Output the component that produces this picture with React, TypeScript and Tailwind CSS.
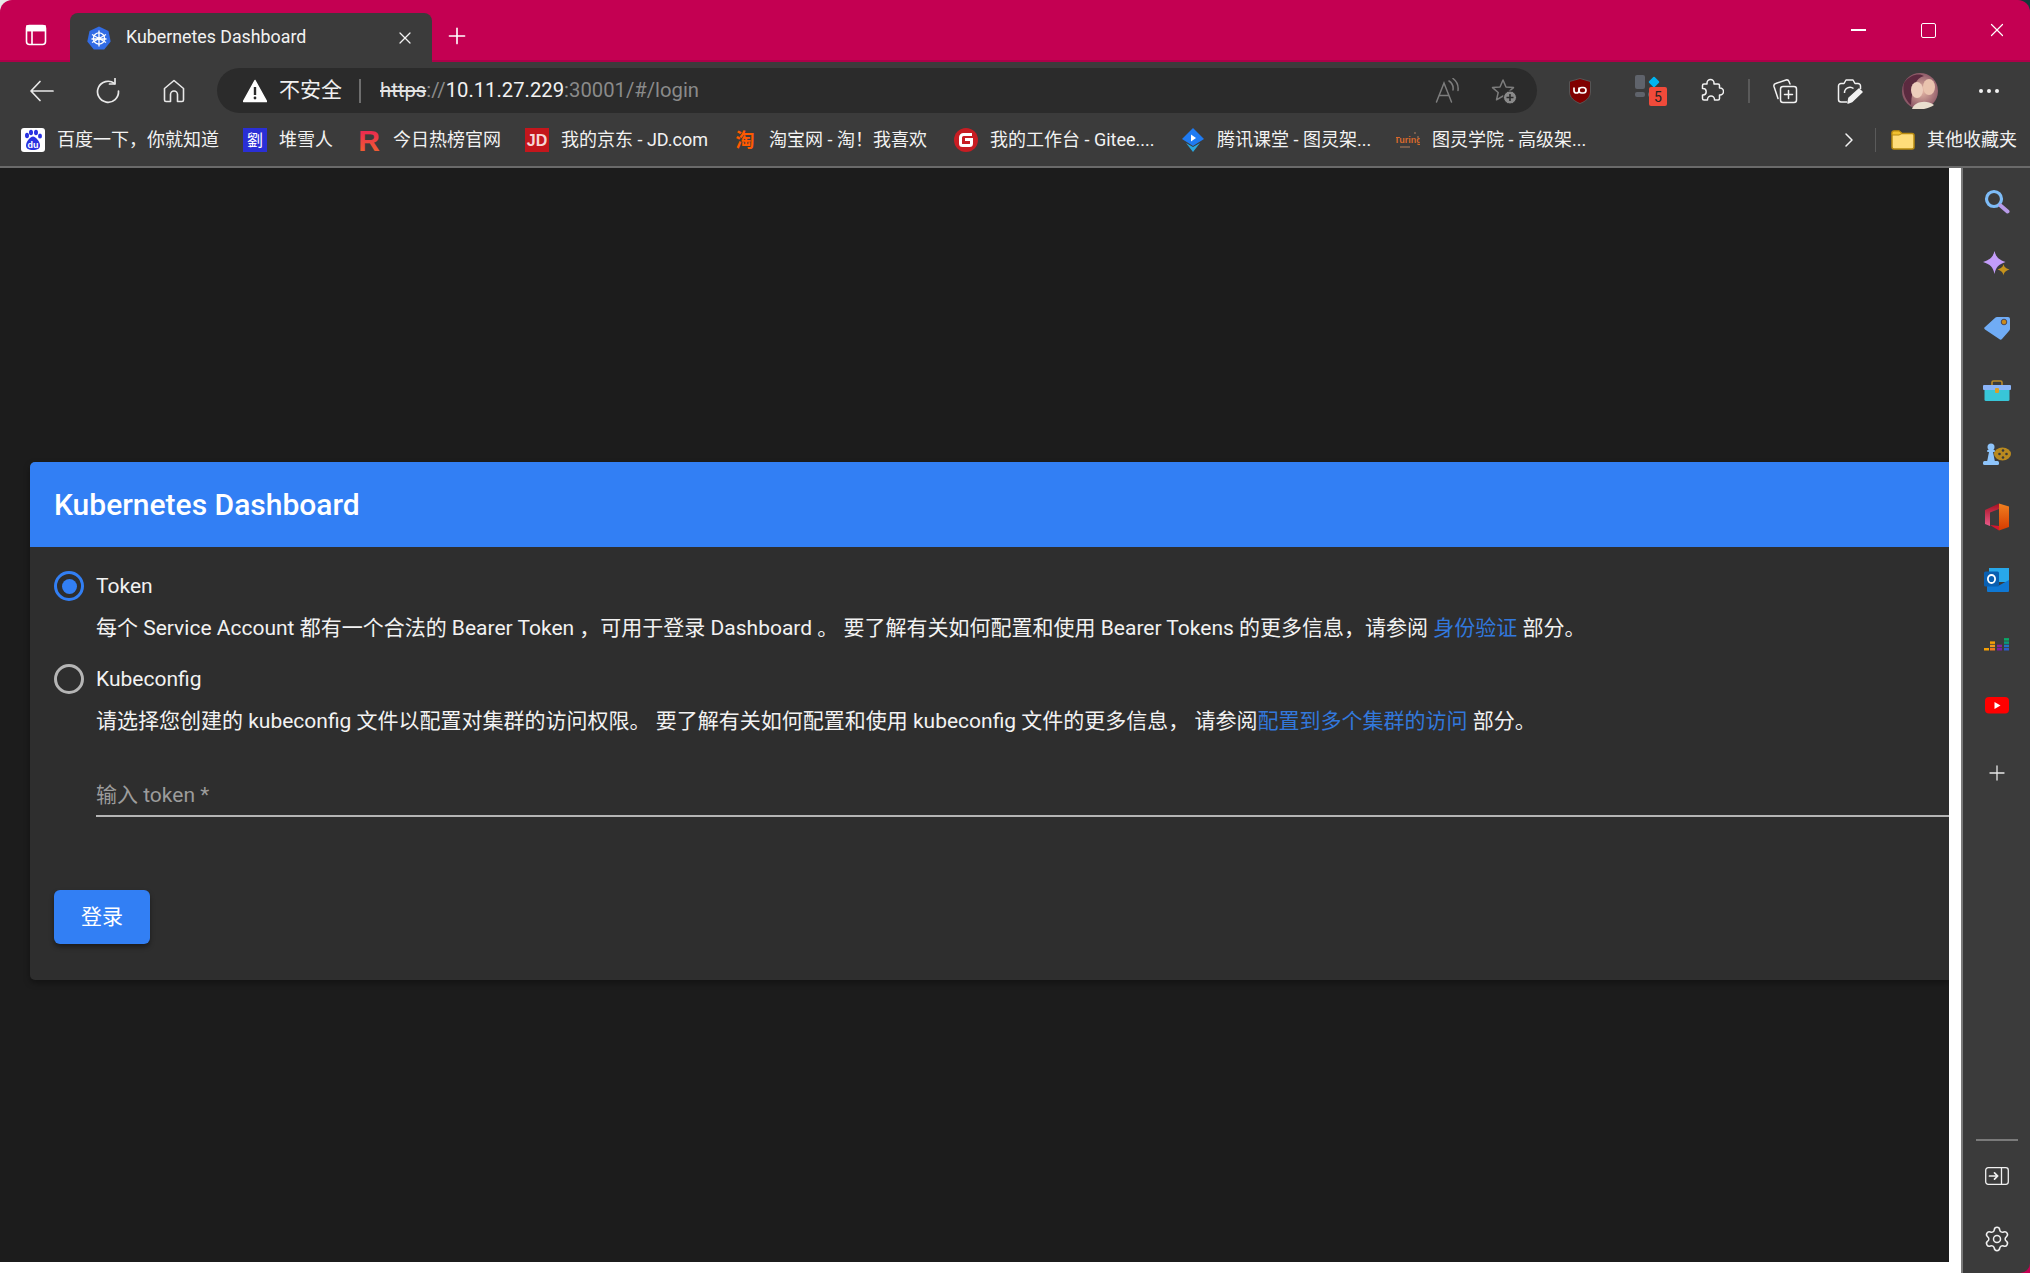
import { ChevronRight, Plus, Settings, X } from "lucide-react";
import type { ReactNode } from "react";

const bookmarks: { width: string; icon: ReactNode; label: string }[] = [
  { width: "w-[222px]", icon: <BaiduIcon />, label: "百度一下，你就知道" },
  { width: "w-[114px]", icon: <BlueSealIcon />, label: "堆雪人" },
  { width: "w-[168px]", icon: <TopHubIcon />, label: "今日热榜官网" },
  { width: "w-[208px]", icon: <JdIcon />, label: "我的京东 - JD.com" },
  { width: "w-[221px]", icon: <TaobaoIcon />, label: "淘宝网 - 淘！我喜欢" },
  { width: "w-[227px]", icon: <GiteeIcon />, label: "我的工作台 - Gitee...." },
  { width: "w-[215px]", icon: <TencentIcon />, label: "腾讯课堂 - 图灵架..." },
  { width: "w-[441px]", icon: <TuringIcon />, label: "图灵学院 - 高级架..." },
];

function BaiduIcon() {
  return (
    <svg width="24" height="24" viewBox="0 0 24 24">
      <rect x="0" y="0" width="24" height="24" rx="3" fill="#fff" />
      <g fill="#2932e1">
        <ellipse cx="6" cy="7.5" rx="2" ry="2.8" />
        <ellipse cx="10" cy="4.5" rx="2" ry="2.8" />
        <ellipse cx="15" cy="4.5" rx="2" ry="2.8" />
        <ellipse cx="19" cy="8" rx="2" ry="2.6" />
        <path d="M12 8.5c3 0 7 5.500 7 9 0 3-2.500 4.500-7 4.500S5 20.500 5 17.500c0-3.500 4-9 7-9Z" />
      </g>
      <text x="12" y="20" textAnchor="middle" fontSize="9" fontWeight="700" fill="#fff" fontFamily="Liberation Sans, sans-serif">
        du
      </text>
    </svg>
  );
}

function BlueSealIcon() {
  return (
    <svg width="24" height="24" viewBox="0 0 24 24">
      <rect width="24" height="24" fill="#2a2fd6" />
      <text x="12" y="18" textAnchor="middle" fontSize="16" fill="#fff" fontFamily="Noto Sans CJK SC, sans-serif">
        劉
      </text>
    </svg>
  );
}

function TopHubIcon() {
  return (
    <svg width="24" height="24" viewBox="0 0 24 24">
      <defs>
        <linearGradient id="hub" x1="0" y1="0" x2="0" y2="1">
          <stop offset="0" stopColor="#e8195a" />
          <stop offset="1" stopColor="#f26a2a" />
        </linearGradient>
      </defs>
      <text x="12" y="23" textAnchor="middle" fontSize="30" fontWeight="700" fill="url(#hub)" fontFamily="Liberation Sans, sans-serif">
        R
      </text>
    </svg>
  );
}

function JdIcon() {
  return (
    <svg width="24" height="24" viewBox="0 0 24 24">
      <rect width="24" height="24" fill="#c4161c" />
      <text x="12" y="18" textAnchor="middle" fontSize="16" fontWeight="700" fill="#f6d6d6" fontFamily="Liberation Sans, sans-serif">
        JD
      </text>
    </svg>
  );
}

function TaobaoIcon() {
  return (
    <svg width="24" height="24" viewBox="0 0 24 24">
      <text x="12" y="19" textAnchor="middle" fontSize="19" fontWeight="700" fill="#ff5a00" fontFamily="Noto Sans CJK SC, sans-serif">
        淘
      </text>
    </svg>
  );
}

function GiteeIcon() {
  return (
    <svg width="24" height="24" viewBox="0 0 24 24">
      <circle cx="12" cy="12" r="12" fill="#c71d23" />
      <path d="M18 6.500H9.500A3 3 0 0 0 6.500 9.500v6a2 2 0 0 0 2 2h7a2 2 0 0 0 2-2V11.500H11" fill="none" stroke="#fff" strokeWidth="3" />
    </svg>
  );
}

function TencentIcon() {
  return (
    <svg width="24" height="24" viewBox="0 0 24 24">
      <path d="M12 0l11 11-11 7L1 11Z" fill="#1f7bf2" />
      <path d="M5 15l7 4 7-4-7 9Z" fill="#2aa6de" />
      <path d="M10 6.500l5 3.500-5 3.500Z" fill="#fff" />
    </svg>
  );
}

function TuringIcon() {
  return (
    <svg width="24" height="24" viewBox="0 0 24 24">
      <text x="12" y="15" textAnchor="middle" fontSize="9" fontWeight="700" fill="#d8692b" fontFamily="Liberation Sans, sans-serif">
        Turing
      </text>
      <path d="M19 4v2M22 8v2M4 19h10" stroke="#8a6a55" strokeWidth="1.500" />
    </svg>
  );
}

function KubeIcon() {
  return (
    <svg width="24" height="24" viewBox="0 0 24 24">
      <path d="M12 .5l9.500 4.600 2.200 10.300-6.500 8.200H6.800L.3 15.400 2.500 5.100Z" fill="#326ce5" />
      <g stroke="#fff" strokeWidth="1.300" fill="none">
        <circle cx="12" cy="12.500" r="5.600" />
        <path d="M12 4.500v16M5 8.500l14 8M19 8.500l-14 8M4.500 13h15" />
      </g>
      <circle cx="12" cy="12.500" r="1.500" fill="#fff" />
    </svg>
  );
}

function TabsIcon() {
  return (
    <svg width="22" height="22" viewBox="0 0 22 22" fill="none" stroke="#fff" strokeWidth="1.600">
      <rect x="1.500" y="1.500" width="19" height="19" rx="3" />
      <path d="M1.500 6.500h19M7 6.500v14" />
      <path d="M2 2h18v4.500H2Z" fill="#fff" />
    </svg>
  );
}

function BackIcon() {
  return (
    <svg width="26" height="26" viewBox="0 0 26 26" fill="none" stroke="#e8e8e8" strokeWidth="1.700" strokeLinecap="round" strokeLinejoin="round">
      <path d="M24 13H2.500M11 3.500L2 13l9 9.500" />
    </svg>
  );
}

function RefreshIcon() {
  return (
    <svg width="26" height="26" viewBox="0 0 26 26" fill="none" stroke="#e8e8e8" strokeWidth="1.700" strokeLinecap="round" strokeLinejoin="round">
      <path d="M19.500 5.500A10.500 10.500 0 1 0 23.500 13" />
      <path d="M20 .5v5.500h-5.500" />
    </svg>
  );
}

function HomeIcon() {
  return (
    <svg width="26" height="26" viewBox="0 0 26 26" fill="none" stroke="#e8e8e8" strokeWidth="1.600" strokeLinejoin="round">
      <path d="M13 2.500L3.500 10.500V22a1.500 1.500 0 0 0 1.500 1.500h4.500V16.500a3.500 3.500 0 0 1 7 0v7H21a1.500 1.500 0 0 0 1.500-1.500V10.500Z" />
    </svg>
  );
}

function WarningIcon() {
  return (
    <svg width="24" height="24" viewBox="0 0 24 24">
      <path d="M12 1.500L23.500 22.500H.5Z" fill="#fff" stroke="#fff" strokeLinejoin="round" strokeWidth="1.500" />
      <path d="M12 8v8" stroke="#2b2b2b" strokeWidth="2.400" />
      <circle cx="12" cy="19" r="1.400" fill="#2b2b2b" />
    </svg>
  );
}

function ReadAloudIcon() {
  return (
    <svg width="26" height="26" viewBox="0 0 26 26" fill="none" stroke="#7d7d7d" strokeWidth="1.500" strokeLinecap="round">
      <path d="M1.500 24L9 5l7.500 19M4.500 17.500h9" />
      <path d="M14 3a9 9 0 0 1 4 9M18 .5a13 13 0 0 1 5 12" />
    </svg>
  );
}

function StarAddIcon() {
  return (
    <svg width="26" height="26" viewBox="0 0 26 26" fill="none">
      <path d="M12 2l3 7 7.500.6-5.700 4.900 1.700 7.300L12 18l-6.500 3.800 1.700-7.300L1.500 9.600 9 9Z" stroke="#7d7d7d" strokeWidth="1.500" strokeLinejoin="round" />
      <circle cx="19" cy="19.500" r="6.500" fill="#8a8a8a" stroke="#2b2b2b" />
      <path d="M19 16v7M15.500 19.500h7" stroke="#2b2b2b" strokeWidth="1.600" />
    </svg>
  );
}

function UBlockIcon() {
  return (
    <svg width="22" height="26" viewBox="0 0 22 26">
      <path d="M11 0.500L21.500 3.500V14c0 5.500-5 9.500-10.500 11.500C5.500 23.500.5 19.500.5 14V3.500Z" fill="#800000" stroke="#555" />
      <path d="M5 9.500v3a2.500 2.500 0 0 0 5 0v-3" fill="none" stroke="#fff" strokeWidth="1.700" />
      <rect x="10" y="9.500" width="7" height="5.500" rx="2.700" fill="none" stroke="#fff" strokeWidth="1.700" />
    </svg>
  );
}

function TileIcon() {
  return (
    <div className="relative h-[31px] w-[32px]">
      <div className="grid h-[22px] w-[22px] grid-cols-2 gap-[3px]">
        <span className="rounded-[2px] bg-[#5f636b]" />
        <span className="flex items-center justify-center">
          <span className="h-[8px] w-[8px] translate-x-[2px] rotate-45 rounded-[1px] bg-[#00b4f0]" />
        </span>
        <span className="rounded-[2px] bg-[#5f636b]" />
        <span className="rounded-[2px] bg-[#5f636b]" />
      </div>
      <span className="absolute bottom-0 right-0 flex h-[19px] w-[18px] items-center justify-center rounded-[2px] bg-[#f04a3a] text-[14px] leading-none text-[#222]">
        5
      </span>
    </div>
  );
}

function ExtensionsIcon() {
  return (
    <svg width="26" height="26" viewBox="0 0 26 26" fill="none" stroke="#f2f2f2" strokeWidth="1.500" strokeLinejoin="round">
      <path d="M12.500 1.500A3.500 3.500 0 0 1 16 5v1h4A1.500 1.500 0 0 1 21.500 7.500V10h.5a3.500 3.500 0 0 1 0 7h-.5v3.500A1.500 1.500 0 0 1 20 22h-3.500v-.5a3.500 3.500 0 0 0-7 0v.5H6a1.500 1.500 0 0 1-1.500-1.500V17h.5a3.200 3.200 0 0 0 0-6.400h-.5V7.500A1.500 1.500 0 0 1 6 6h3V5a3.500 3.500 0 0 1 3.500-3.500Z" />
    </svg>
  );
}

function CollectionsIcon() {
  return (
    <svg width="26" height="26" viewBox="0 0 26 26" fill="none" stroke="#f2f2f2" strokeWidth="1.500" strokeLinejoin="round" strokeLinecap="round">
      <rect x="8.500" y="8.500" width="16" height="16" rx="2.500" />
      <path d="M16.500 12.500v8M12.500 16.500h8" />
      <path d="M6 20.500L2 8.500a2.500 2.500 0 0 1 1.700-3L14 2a2.500 2.500 0 0 1 3 1.500L18 6" />
    </svg>
  );
}

function CapturePenIcon() {
  return (
    <svg width="26" height="26" viewBox="0 0 26 26" fill="none" stroke="#f2f2f2" strokeWidth="1.500" strokeLinejoin="round">
      <path d="M10 24H4a2.500 2.500 0 0 1-2.500-2.500V8A2.500 2.500 0 0 1 4 5.500h3L9 2h7l2 3.500h3A2.500 2.500 0 0 1 23.500 8v3" />
      <path d="M7.500 15a5.500 5.500 0 0 1 9-4.500" />
      <path d="M11 25l1-5 10-9 3 3-10 9.500Z" fill="#f2f2f2" />
    </svg>
  );
}

function AvatarIcon() {
  return (
    <svg width="36" height="36" viewBox="0 0 36 36">
      <defs>
        <radialGradient id="avatar" cx="0.55" cy="0.5" r="0.7">
          <stop offset="0" stopColor="#e6b8a6" />
          <stop offset="1" stopColor="#6b3550" />
        </radialGradient>
      </defs>
      <circle cx="18" cy="18" r="18" fill="url(#avatar)" />
      <path d="M2 10C8 1 18 0 22 3 14 5 10 14 9 32 3 27 0 18 2 10Z" fill="#5b2a3f" />
      <ellipse cx="15" cy="17" rx="6" ry="8" fill="#eccdbc" />
      <ellipse cx="27" cy="14" rx="6" ry="8" fill="#e9c3ae" />
      <path d="M10 36c2-7 14-10 22-4-4 3-14 6-22 4Z" fill="#e9dfcf" />
    </svg>
  );
}

function FolderIcon() {
  return (
    <svg width="24" height="21" viewBox="0 0 24 21">
      <path d="M1 4a2 2 0 0 1 2-2h5l3 2.500h10a2 2 0 0 1 2 2V18a2 2 0 0 1-2 2H3a2 2 0 0 1-2-2Z" fill="#ffdd7a" stroke="#b88a10" strokeWidth="1.500" />
      <path d="M1 4a2 2 0 0 1 2-2h5l3 2.500L8 6H1Z" fill="#f0c030" stroke="#b88a10" strokeWidth="1" />
    </svg>
  );
}

function SearchSideIcon() {
  return (
    <svg width="26" height="26" viewBox="0 0 26 26" fill="none">
      <circle cx="10" cy="10" r="7.500" stroke="#7ebcf7" strokeWidth="3.200" />
      <path d="M16.500 16.500l7 6" stroke="#b79ae8" strokeWidth="4" strokeLinecap="round" />
    </svg>
  );
}

function SparkleSideIcon() {
  return (
    <svg width="27" height="27" viewBox="0 0 27 27">
      <path d="M11.500 0c1.500 6 4 8.500 11 11-7 2.500-9.500 5-11 12-1.500-7-4-9.500-11.500-12C7.500 8.500 10 6 11.500 0Z" fill="#c39cf8" />
      <path d="M20.500 13c.7 3 2 4 6 5.500-4 1.500-5.300 2.500-6 6-.7-3.500-2-4.500-6-6 4-1.500 5.300-2.500 6-5.500Z" fill="#c5921c" />
    </svg>
  );
}

function TagSideIcon() {
  return (
    <svg width="26" height="24" viewBox="0 0 26 24">
      <path d="M13 1h11a2 2 0 0 1 2 2v10a2 2 0 0 1-.6 1.400L18 23a2 2 0 0 1-2.800 0L1 13.500a1.500 1.500 0 0 1 0-2.400L11.500 1.600A2 2 0 0 1 13 1Z" fill="#70acf5" />
      <circle cx="20" cy="6" r="2.800" fill="#c98a1a" stroke="#335" strokeWidth=".8" />
    </svg>
  );
}

function ToolboxSideIcon() {
  return (
    <svg width="28" height="22" viewBox="0 0 28 22">
      <path d="M9 7V2.500A1.500 1.500 0 0 1 10.500 1h7A1.500 1.500 0 0 1 19 2.500V7" fill="none" stroke="#b98b2a" strokeWidth="1.600" />
      <rect x="1.500" y="5" width="25" height="16" rx="1.500" fill="#38c6d8" />
      <rect x="0" y="5" width="28" height="5" rx="1" fill="#8ab4f8" />
      <rect x="12" y="8" width="4" height="5" rx="1" fill="#d9a02a" />
    </svg>
  );
}

function GamesSideIcon() {
  return (
    <svg width="28" height="22" viewBox="0 0 28 22">
      <ellipse cx="19.500" cy="11" rx="8.500" ry="6.500" fill="#b98a1f" />
      <g fill="#3a3a3a">
        <circle cx="20" cy="7.500" r="1.300" />
        <circle cx="16.500" cy="11" r="1.300" />
        <circle cx="23.500" cy="11" r="1.300" />
        <circle cx="20" cy="14.500" r="1.300" />
      </g>
      <g fill="#8ec4fb">
        <circle cx="8" cy="4" r="3.500" />
        <rect x="4" y="7" width="8" height="2" rx="1" />
        <path d="M6 9h4l2 10H4Z" />
        <rect x="0" y="18" width="16" height="4" rx="1.500" />
      </g>
    </svg>
  );
}

function OfficeSideIcon() {
  return (
    <svg width="24" height="28" viewBox="0 0 24 28">
      <defs>
        <linearGradient id="officeRight" x1="0" y1="0" x2="0" y2="1">
          <stop offset="0" stopColor="#f08020" />
          <stop offset="1" stopColor="#d63a00" />
        </linearGradient>
        <linearGradient id="officeLeft" x1="0" y1="0" x2="0" y2="1">
          <stop offset="0" stopColor="#a81020" />
          <stop offset="1" stopColor="#e85a8a" />
        </linearGradient>
      </defs>
      <path d="M14 0.500L24 3.500V24L14 27.500V0.500Z" fill="url(#officeRight)" />
      <path d="M14 .5L0 7v14l5 2V9.500L14 6Z" fill="url(#officeLeft)" />
      <path d="M5 22l9 5.500V23Z" fill="#d8142e" />
    </svg>
  );
}

function OutlookSideIcon() {
  return (
    <svg width="26" height="24" viewBox="0 0 26 24">
      <rect x="5" y="0" width="20" height="14" fill="#28a8ea" />
      <path d="M3 12l11 6 11-6v11a1 1 0 0 1-1 1H4a1 1 0 0 1-1-1Z" fill="#0f78d4" />
      <rect x="0" y="3.500" width="15" height="15" rx="1.500" fill="#0a5fb0" />
      <ellipse cx="7.500" cy="11" rx="3.600" ry="4" fill="none" stroke="#fff" strokeWidth="1.800" />
    </svg>
  );
}

function BarsSideIcon() {
  const columns = [
    { x: 0, colors: ["#f5a005"] },
    { x: 6, colors: ["#ee7a1e", "#f09a1e", "#f5a005"] },
    { x: 13, colors: ["#7a1fa0", "#8a1f9a"] },
    { x: 20, colors: ["#2a5cc8", "#1e72c8", "#0a9a78", "#0aa868"] },
  ];
  return (
    <svg width="25" height="16" viewBox="0 0 25 16">
      {columns.map((col) =>
        col.colors.map((c, i) => <rect key={`${col.x}-${i}`} x={col.x} y={13 - i * 3.300} width="5" height="2.500" fill={c} />),
      )}
    </svg>
  );
}

function YoutubeSideIcon() {
  return (
    <svg width="24" height="17" viewBox="0 0 24 17">
      <rect width="24" height="16.500" rx="4" fill="#ff0000" />
      <path d="M9.500 5l6 3.500-6 3.500Z" fill="#fff" />
    </svg>
  );
}

function PanelIcon() {
  return (
    <svg width="24" height="18" viewBox="0 0 24 18" fill="none" stroke="#f0f0f0" strokeWidth="1.300" strokeLinecap="round" strokeLinejoin="round">
      <rect x=".7" y=".7" width="22.600" height="16.600" rx="2.500" />
      <path d="M16.500 .7v16.600" />
      <path d="M4.500 9h8M9.500 5.800L12.700 9l-3.200 3.200" strokeWidth="1.700" />
    </svg>
  );
}

const sideIcons = [
  <SearchSideIcon key="search" />,
  <SparkleSideIcon key="sparkle" />,
  <TagSideIcon key="tag" />,
  <ToolboxSideIcon key="toolbox" />,
  <GamesSideIcon key="games" />,
  <OfficeSideIcon key="office" />,
  <OutlookSideIcon key="outlook" />,
  <BarsSideIcon key="bars" />,
  <YoutubeSideIcon key="youtube" />,
];

function TabStrip() {
  return (
    <div className="flex h-[62px] shrink-0 items-end rounded-t-[12px] border-b-2 border-[#ad0049] bg-[#c40052]">
      <div className="flex h-[50px] w-[70px] items-center justify-center pb-[1px] pl-[2px]">
        <TabsIcon />
      </div>
      <div className="mb-[-2px] flex h-[49px] w-[362px] items-center rounded-t-[8px] bg-[#3b3b3b] pl-[17px] pr-[17px]">
        <KubeIcon />
        <span className="ml-[15px] flex-1 text-[17.8px] text-[#f2f2f2]">Kubernetes Dashboard</span>
        <X size={20} strokeWidth={1.5} color="#f2f2f2" />
      </div>
      <div className="flex h-[49px] w-[50px] items-center justify-center">
        <Plus size={26} strokeWidth={1.5} color="#fff" />
      </div>
      <div className="flex h-[60px] flex-1 items-center justify-end">
        <div className="flex w-[68px] justify-center">
          <span className="h-[2px] w-[15px] bg-white" />
        </div>
        <div className="flex w-[72px] justify-center">
          <span className="h-[15px] w-[15px] rounded-[2px] border border-white" />
        </div>
        <div className="flex w-[66px] justify-center">
          <X size={22} strokeWidth={1.3} color="#fff" />
        </div>
      </div>
    </div>
  );
}

function AddressRow() {
  return (
    <div className="flex h-[51px] shrink-0 items-center pt-[6px]">
      <div className="flex w-[217px] items-center pl-[29px]">
        <BackIcon />
        <span className="ml-[40px]">
          <RefreshIcon />
        </span>
        <span className="ml-[40px]">
          <HomeIcon />
        </span>
      </div>
      <div className="flex h-[45px] w-[1320px] items-center rounded-full bg-[#2b2b2b] pl-[26px] pr-[20px] text-[21px]">
        <WarningIcon />
        <span className="ml-[12px] text-[#f0f0f0]">不安全</span>
        <span className="ml-[17px] h-[24px] w-[2px] bg-[#6e6e6e]" />
        <span className="ml-[19px] text-[20.25px]">
          <span className="text-[#e4e4e4] line-through">https</span>
          <span className="text-[#8a8a8a]">://</span>
          <span className="text-[#f2f2f2]">10.11.27.229</span>
          <span className="text-[#8a8a8a]">:30001/#/login</span>
        </span>
        <span className="ml-auto">
          <ReadAloudIcon />
        </span>
        <span className="ml-[30px]">
          <StarAddIcon />
        </span>
      </div>
      <div className="flex flex-1 items-center">
        <span className="ml-[32px]">
          <UBlockIcon />
        </span>
        <span className="ml-[44px]">
          <TileIcon />
        </span>
        <span className="ml-[31px]">
          <ExtensionsIcon />
        </span>
        <span className="ml-[24px] h-[24px] w-[2px] bg-[#5a5a5a]" />
        <span className="ml-[22px]">
          <CollectionsIcon />
        </span>
        <span className="ml-[39px]">
          <CapturePenIcon />
        </span>
        <span className="ml-[39px]">
          <AvatarIcon />
        </span>
        <span className="ml-[41px] flex gap-[4px]">
          <i className="h-[4px] w-[4px] rounded-full bg-[#f2f2f2]" />
          <i className="h-[4px] w-[4px] rounded-full bg-[#f2f2f2]" />
          <i className="h-[4px] w-[4px] rounded-full bg-[#f2f2f2]" />
        </span>
      </div>
    </div>
  );
}

function BookmarkRow() {
  return (
    <div className="flex h-[55px] shrink-0 items-center border-b-2 border-[#6a6a6a] pl-[21px] text-[18px] text-[#f2f2f2]">
      {bookmarks.map((b) => (
        <div key={b.label} className={`flex items-center gap-[12px] whitespace-nowrap ${b.width}`}>
          <span className="block h-[24px] w-[24px] shrink-0">{b.icon}</span>
          <span>{b.label}</span>
        </div>
      ))}
      <ChevronRight size={24} strokeWidth={1.5} color="#f2f2f2" />
      <span className="ml-[14px] h-[24px] w-[1px] bg-[#5a5a5a]" />
      <span className="ml-[15px] block h-[21px]">
        <FolderIcon />
      </span>
      <span className="ml-[12px] whitespace-nowrap">其他收藏夹</span>
    </div>
  );
}

function Radio({ checked }: { checked?: boolean }) {
  return (
    <span
      className={`flex h-[30px] w-[30px] shrink-0 items-center justify-center rounded-full border-[3px] ${
        checked ? "border-[#327ff4]" : "border-[#b5b5b5]"
      }`}
    >
      {checked ? <span className="h-[15px] w-[15px] rounded-full bg-[#327ff4]" /> : null}
    </span>
  );
}

function LoginCard() {
  return (
    <div className="rounded-l-[5px] bg-[#2e2e2e] shadow-[0_3px_6px_rgba(0,0,0,0.35)]">
      <div className="flex h-[85px] items-center rounded-tl-[5px] bg-[#327ff4] pl-[24px] text-[30px] font-medium text-white">
        Kubernetes Dashboard
      </div>
      <div className="pb-[36px] pl-[24px] pt-[24px] text-[21px] leading-[30px] text-[#f2f2f2]">
        <div className="flex items-center gap-[12px]">
          <Radio checked />
          <span>Token</span>
        </div>
        <p className="ml-[42px] mt-[12px] whitespace-nowrap">
          每个 Service Account 都有一个合法的 Bearer Token ，可用于登录 Dashboard 。 要了解有关如何配置和使用 Bearer Tokens 的更多信息，请参阅{" "}
          <a className="text-[#3278dc]">身份验证</a> 部分。
        </p>
        <div className="mt-[21px] flex items-center gap-[12px]">
          <Radio />
          <span>Kubeconfig</span>
        </div>
        <p className="ml-[42px] mt-[12px] whitespace-nowrap">
          请选择您创建的 kubeconfig 文件以配置对集群的访问权限。 要了解有关如何配置和使用 kubeconfig 文件的更多信息， 请参阅
          <a className="text-[#3278dc]">配置到多个集群的访问</a> 部分。
        </p>
        <input
          placeholder="输入 token *"
          className="ml-[42px] mt-[43px] block h-[38px] w-[calc(100%-42px)] border-b-2 border-[#b5b5b5] bg-transparent pb-[4px] text-[21px] placeholder:text-[#9c9c9c]"
        />
        <button className="mt-[73px] block h-[54px] w-[96px] rounded-[6px] bg-[#327ff4] text-[21px] text-white shadow-[0_3px_5px_rgba(0,0,0,0.4)]">
          登录
        </button>
      </div>
    </div>
  );
}

function SidePanel() {
  return (
    <aside className="flex w-[69px] shrink-0 flex-col items-center rounded-br-[10px] border-l-2 border-[#7a7a7a] bg-[#3b3b3b] pt-[2px]">
      {sideIcons.map((icon) => (
        <div key={icon.key} className="flex h-[63px] w-full items-center justify-center">
          {icon}
        </div>
      ))}
      <div className="mt-[4px] flex h-[63px] items-center justify-center">
        <Plus size={24} strokeWidth={1.3} color="#e8e8e8" />
      </div>
      <div className="mt-auto h-[2px] w-[42px] bg-[#7a7a7a]" />
      <div className="mt-[17px] flex h-[36px] items-center">
        <PanelIcon />
      </div>
      <div className="mb-[16px] mt-[27px] flex h-[36px] items-center">
        <Settings size={28} strokeWidth={1.3} color="#f0f0f0" />
      </div>
    </aside>
  );
}

export default function App() {
  return (
    <div className="flex h-[1273px] w-[2030px] flex-col overflow-hidden bg-[#c40052] font-['Roboto','Noto_Sans_CJK_SC',sans-serif]">
      {/* corners behind the window: light at the left, dark at the right */}
      <div className="bg-[linear-gradient(90deg,#e8e8e8_50%,#123a3a_50%)]">
        <TabStrip />
      </div>
      <div className="bg-[#3b3b3b]">
        <AddressRow />
        <BookmarkRow />
      </div>
      <div className="flex min-h-0 flex-1">
        <div className="flex min-w-0 flex-1 flex-col bg-white">
          <div className="flex min-h-0 flex-1">
            <main className="min-w-0 flex-1 bg-[#1c1c1c] pl-[30px] pt-[294px]">
              <LoginCard />
            </main>
            <div className="w-[12px] shrink-0 bg-white" />
          </div>
          <div className="h-[11px] shrink-0 bg-white" />
        </div>
        <SidePanel />
      </div>
    </div>
  );
}
